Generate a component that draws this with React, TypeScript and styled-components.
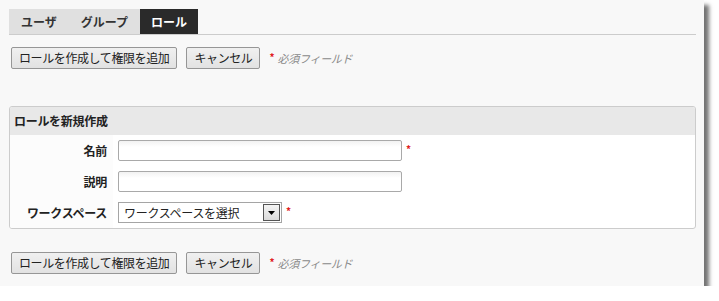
import React from "react"
import styled, { createGlobalStyle } from "styled-components"

const GlobalStyle = createGlobalStyle`
    html, body {
        margin: 0;
        padding: 0;
        background: #ffffff;
    }
    body {
        font-family: "Noto Sans CJK JP", "Noto Sans", sans-serif;
        font-size: 12px;
        color: #222;
    }
`

const Window = styled.div`
    width: 704px;
    height: 286px;
    box-sizing: border-box;
    padding: 9px 8px 0 9px;
    background: #f8f8f8;
    box-shadow: 5px 5px 4px rgba(0, 0, 0, 0.55);
`

const TabBar = styled.div`
    display: flex;
    border-bottom: 1px solid #cccccc;
`

const Tab = styled.div<{ $active?: boolean }>`
    padding: 0 ${(p) => (p.$active ? 11 : 12)}px;
    height: 25px;
    line-height: 25px;
    font-weight: bold;
    font-size: 12px;
    background: ${(p) => (p.$active ? "#2a2a2a" : "#e0e0e0")};
    color: ${(p) => (p.$active ? "#ffffff" : "#333333")};
`

const ActionRow = styled.div<{ $top: number }>`
    display: flex;
    align-items: center;
    gap: 9px;
    margin-top: ${(p) => p.$top}px;
    padding-left: 2px;
`

const Button = styled.button`
    height: 22px;
    padding: 0 7px;
    font-family: inherit;
    font-size: 12px;
    letter-spacing: -0.4px;
    line-height: 20px;
    color: #222;
    background: linear-gradient(#f0f0f0, #e2e2e2);
    border: 1px solid #969696;
    border-radius: 2px;
`

const Required = styled.span`
    display: flex;
    align-items: center;
    gap: 3px;
`

const Star = styled.span`
    color: #e0201c;
    font-size: 10px;
    font-weight: bold;
    line-height: 10px;
    margin-top: -3px;
`

const RequiredText = styled.span`
    color: #8a8a8a;
    font-style: italic;
    font-size: 11px;
    letter-spacing: -0.3px;
`

const Box = styled.div`
    margin-top: 37px;
    border: 1px solid #cccccc;
    border-radius: 3px;
    background: #ffffff;
    overflow: hidden;
`

const BoxHeader = styled.div`
    height: 28px;
    line-height: 28px;
    padding-left: 4px;
    background: #e8e8e8;
    font-weight: bold;
    font-size: 12px;
    letter-spacing: -0.3px;
`

const Form = styled.div`
    display: grid;
    grid-template-columns: 103px 1fr;
`

const Label = styled.div`
    display: flex;
    align-items: center;
    justify-content: flex-end;
    padding-right: 6px;
    height: 31px;
    background: #fcfcfc;
    font-weight: bold;
    font-size: 12px;
    letter-spacing: -0.3px;
`

const Field = styled.div`
    display: flex;
    align-items: center;
    gap: 4px;
    height: 31px;
    padding-left: 5px;
`

const TextInput = styled.input`
    box-sizing: border-box;
    width: 284px;
    height: 21px;
    border: 1px solid #a9a9a9;
    border-radius: 2px;
    background: linear-gradient(#f2f2f2, #ffffff 6px);
    font-family: inherit;
    font-size: 12px;
    outline: none;
`

const Select = styled.div`
    box-sizing: border-box;
    display: flex;
    align-items: center;
    justify-content: space-between;
    width: 164px;
    height: 21px;
    padding: 0 1px 0 5px;
    border: 1px solid #a5a5a5;
    background: #ffffff;
    font-size: 12px;
    letter-spacing: -0.3px;
`

const SelectArrow = styled.span`
    box-sizing: border-box;
    display: flex;
    align-items: center;
    justify-content: center;
    width: 17px;
    height: 17px;
    border: 1px solid #555;
    background: linear-gradient(#f4f4f4, #dadada);
`

const Actions = ({ top }: { top: number }) => (
    <ActionRow $top={top}>
        <Button>ロールを作成して権限を追加</Button>
        <Button>キャンセル</Button>
        <Required>
            <Star>*</Star>
            <RequiredText>必須フィールド</RequiredText>
        </Required>
    </ActionRow>
)

export default function App() {
    return (
        <>
            <GlobalStyle />
            <Window>
                <TabBar>
                    <Tab>ユーザ</Tab>
                    <Tab>グループ</Tab>
                    <Tab $active>ロール</Tab>
                </TabBar>
                <Actions top={12} />
                <Box>
                    <BoxHeader>ロールを新規作成</BoxHeader>
                    <Form>
                        <Label>名前</Label>
                        <Field>
                            <TextInput />
                            <Star>*</Star>
                        </Field>
                        <Label>説明</Label>
                        <Field>
                            <TextInput />
                        </Field>
                        <Label>ワークスペース</Label>
                        <Field>
                            <Select>
                                ワークスペースを選択
                                <SelectArrow>
                                    <svg width="7" height="4" viewBox="0 0 7 4">
                                        <path d="M0 0 H7 L3.5 4 Z" fill="#000" />
                                    </svg>
                                </SelectArrow>
                            </Select>
                            <Star>*</Star>
                        </Field>
                    </Form>
                </Box>
                <Actions top={23} />
            </Window>
        </>
    )
}
